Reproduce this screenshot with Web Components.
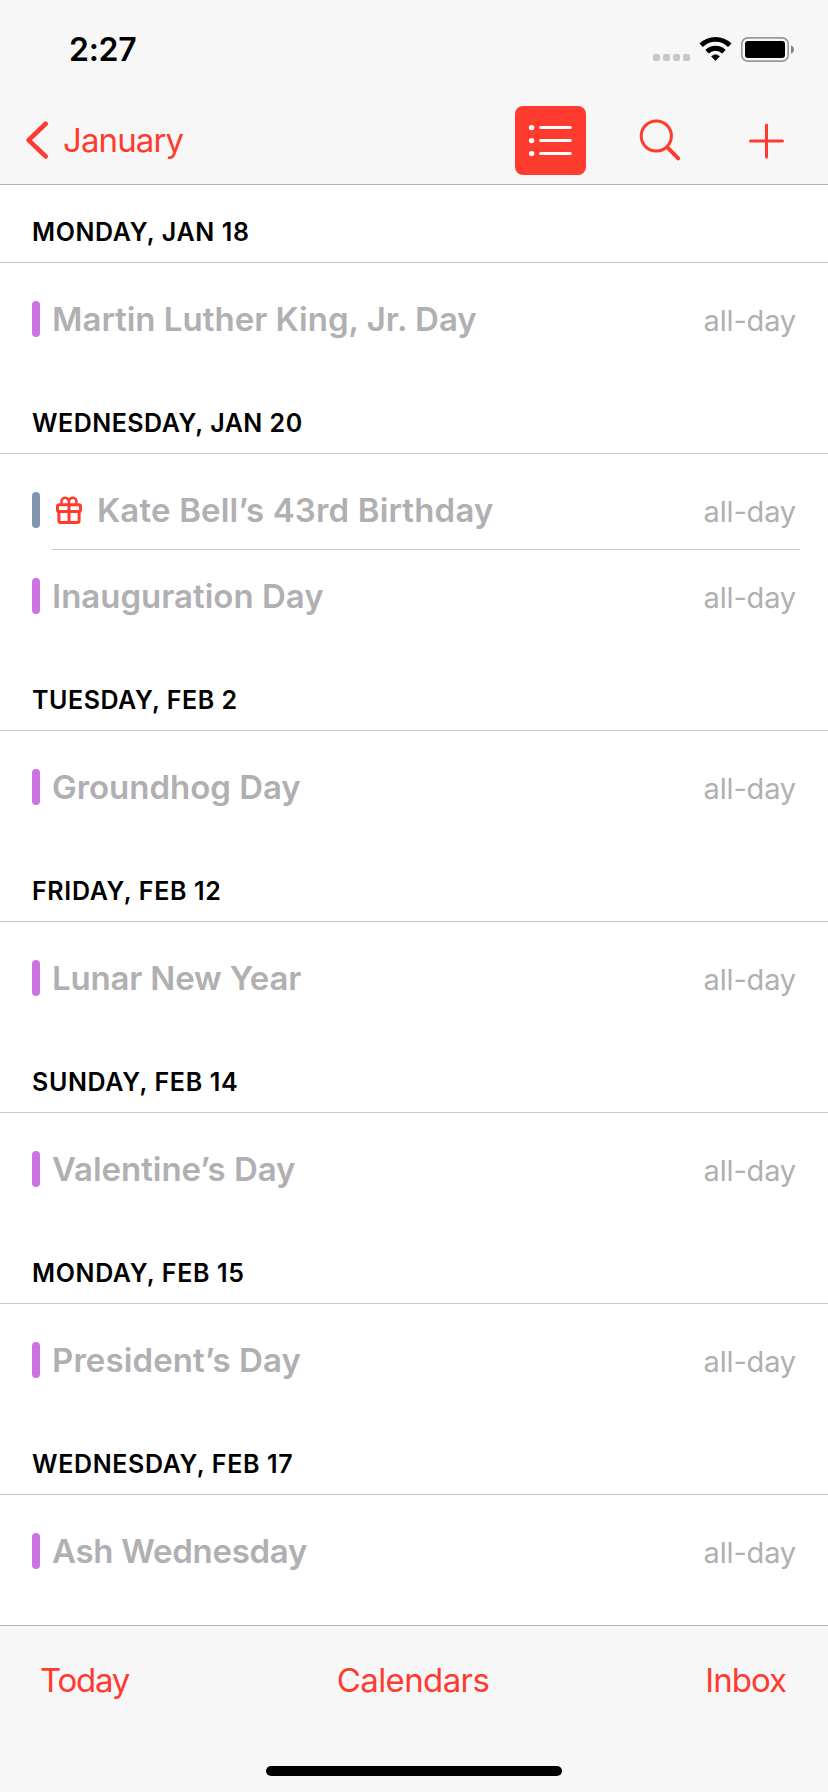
<!DOCTYPE html>
<html lang="en">
<head>
<meta charset="utf-8">
<title>Calendar</title>
<style>
  html, body { margin: 0; height: 100%; }
  body { background: #fff; font-family: Inter, "Liberation Sans", sans-serif; color: #000; }
</style>
</head>
<body>
<calendar-app>
  <status-bar slot="top" time="2:27"></status-bar>
  <nav-bar slot="top" back="January"></nav-bar>
  <day-section heading="MONDAY, JAN 18" spacing=".62px">
    <event-row spacing="0px">Martin Luther King, Jr. Day</event-row>
  </day-section>
  <day-section heading="WEDNESDAY, JAN 20" spacing=".5px">
    <event-row birthday spacing=".17px">Kate Bell’s 43rd Birthday</event-row>
    <event-row spacing="0px">Inauguration Day</event-row>
  </day-section>
  <day-section heading="TUESDAY, FEB 2" spacing=".55px">
    <event-row spacing="-.03px">Groundhog Day</event-row>
  </day-section>
  <day-section heading="FRIDAY, FEB 12" spacing=".66px">
    <event-row spacing="-.18px">Lunar New Year</event-row>
  </day-section>
  <day-section heading="SUNDAY, FEB 14" spacing=".66px">
    <event-row spacing="-.04px">Valentine’s Day</event-row>
  </day-section>
  <day-section heading="MONDAY, FEB 15" spacing=".63px">
    <event-row spacing=".1px">President’s Day</event-row>
  </day-section>
  <day-section heading="WEDNESDAY, FEB 17" spacing=".65px">
    <event-row spacing="-.28px">Ash Wednesday</event-row>
  </day-section>
  <tool-bar slot="bottom">
    <tool-button spacing="-1.27px">Today</tool-button>
    <tool-button spacing="-.6px">Calendars</tool-button>
    <tool-button spacing="-1px">Inbox</tool-button>
  </tool-bar>
</calendar-app>

<script>
function define(name, render) {
  customElements.define(name, class extends HTMLElement {
    constructor() {
      super();
      this.attachShadow({ mode: 'open' });
    }
    connectedCallback() {
      this.shadowRoot.innerHTML = render(this);
    }
  });
}

define('calendar-app', () => `
  <style>
    :host { display: flex; flex-direction: column; width: 828px; height: 1792px; overflow: hidden; }
    header { flex: none; height: 184px; background: #f7f7f7; border-bottom: 1px solid #b2b2b2; }
    main { flex: 1; min-height: 0; overflow: hidden; }
  </style>
  <header><slot name="top"></slot></header>
  <main><slot></slot></main>
  <slot name="bottom"></slot>`);

define('status-bar', el => `
  <style>
    :host { display: flex; height: 98px; box-sizing: border-box; padding: 30px 33px 0 69px; justify-content: space-between; align-items: flex-start; }
    time { font-size: 32px; font-weight: 570; line-height: 39px; letter-spacing: -.3px; }
    svg { display: block; margin-top: 4px; }
  </style>
  <time>${el.getAttribute('time')}</time>
  <svg width="144" height="32" viewBox="651 34 144 32">
    <g fill="#c7c7c7">
      <rect x="653" y="54" width="7" height="7" rx="2"/><rect x="663" y="54" width="7" height="7" rx="2"/>
      <rect x="673" y="54" width="7" height="7" rx="2"/><rect x="683" y="54" width="7" height="7" rx="2"/>
    </g>
    <g fill="none" stroke="#000" stroke-width="4.9">
      <path d="M701.2 45.3a20.3 20.3 0 0 1 28.6 0"/>
      <path d="M707.1 51.7a11.9 11.9 0 0 1 16.8 0"/>
    </g>
    <path d="M711.5 56.4a6.2 6.2 0 0 1 8 0l-4 4.2z" stroke="#000" stroke-width=".6" stroke-linejoin="round"/>
    <rect x="741.8" y="37.8" width="46.4" height="23.4" rx="6" fill="none" stroke="#999" stroke-width="1.7"/>
    <rect x="745" y="41" width="40" height="17" rx="3"/>
    <path d="M791 45.2c4 1.4 4 7.2 0 8.6z" fill="#858585"/>
  </svg>`);

define('nav-bar', el => `
  <style>
    :host { display: flex; align-items: center; justify-content: space-between; height: 86px; box-sizing: border-box; padding: 0 40px 1px 24px; color: #ff3b30; }
    svg { display: block; fill: none; stroke: currentColor; stroke-linecap: round; }
    .back { display: flex; align-items: center; gap: 13px; font-size: 33px; line-height: 40px; letter-spacing: -.9px; margin-bottom: 1px; }
    .actions { display: flex; align-items: center; }
    .list { width: 71px; height: 69px; border-radius: 8px; background: #ff3b30; color: #fff; margin-right: 48px; }
    .search { margin-right: 64px; }
  </style>
  <div class="back">
    <svg width="26" height="42" viewBox="24 119 26 42" stroke-width="4.7" stroke-linejoin="round"><path d="M45.7 123.8 28.6 140.1 45.7 156.4"/></svg>
    <span>${el.getAttribute('back')}</span>
  </div>
  <div class="actions">
    <div class="list">
      <svg width="71" height="69" viewBox="515 106 71 69" stroke-width="3">
        <path d="M540.8 127.5h29.5M540.8 140.5h29.5M540.8 153.5h29.5"/>
        <g fill="currentColor" stroke="none"><circle cx="531.6" cy="127.6" r="2.7"/><circle cx="531.6" cy="140.6" r="2.7"/><circle cx="531.6" cy="153.6" r="2.7"/></g>
      </svg>
    </div>
    <svg class="search" width="50" height="50" viewBox="634 115.5 50 50" stroke-width="3">
      <circle cx="656.3" cy="135.5" r="15.1"/><path d="M667.4 146.9 678.2 157.8" stroke-width="4"/>
    </svg>
    <svg width="40" height="40" viewBox="748 120.5 40 40" stroke-width="3"><path d="M750.5 140.5h32M766.5 124.5v32"/></svg>
  </div>`);

define('day-section', el => `
  <style>
    :host { display: block; margin-bottom: 17px; }
    h2 { margin: 0; box-sizing: border-box; height: 78px; padding: 32px 32px 0; border-bottom: 1px solid #c8c8ca;
         font-size: 25px; font-weight: 560; line-height: 30px; letter-spacing: ${el.getAttribute('spacing')}; }
    .events { padding-top: 10px; }
  </style>
  <h2>${el.getAttribute('heading')}</h2>
  <div class="events"><slot></slot></div>`);

const GIFT = `
  <svg width="28" height="30" viewBox="55 495 28 30" fill="none" stroke="#ff3b30" stroke-width="3" stroke-linejoin="round">
    <rect x="57.5" y="504.7" width="23" height="6.8" rx="1.6"/>
    <path d="M58.9 511.5v9.2q0 1.8 1.8 1.8h16.6q1.8 0 1.8-1.8v-9.2M69 504.5v18"/>
    <path stroke-width="2.6" d="M69 504.3v-3.2a3.8 3.8 0 1 0-6.9 2.6M69 504.3v-3.2a3.8 3.8 0 1 1 6.9 2.6"/>
  </svg>`;

define('event-row', el => {
  const birthday = el.hasAttribute('birthday');
  return `
  <style>
    :host { display: flex; height: 86px; box-sizing: border-box; padding: 0 28px 0 32px; gap: 12px; color: #b0b0b2; }
    .bar { width: 8px; height: 36px; margin-top: 28px; border-radius: 4px; background: ${birthday ? '#8295af' : '#cc73e1'}; }
    .body { flex: 1; display: flex; align-items: flex-start; padding-top: 26px; padding-right: 4px; border-bottom: 1px solid transparent; white-space: nowrap; }
    :host(:not(:last-of-type)) .body { border-bottom-color: #c8c8ca; }
    svg { display: block; margin: 5px 14px 0 3px; }
    .title { flex: 1; font-size: 33px; font-weight: 570; line-height: 40px; letter-spacing: ${el.getAttribute('spacing')}; }
    .when { font-size: 29px; line-height: 35px; letter-spacing: -.17px; margin-top: 4px; }
  </style>
  <div class="bar"></div>
  <div class="body">${birthday ? GIFT : ''}<span class="title"><slot></slot></span><span class="when">all-day</span></div>`;
});

define('tool-bar', () => `
  <style>
    :host { flex: none; display: flex; flex-direction: column; align-items: center; height: 167px; box-sizing: border-box;
            border-top: 1px solid #b2b2b2; background: #f7f7f7; }
    nav { width: 100%; box-sizing: border-box; display: grid; grid-template-columns: 1fr auto 1fr; padding: 34px 42px 0 40px; }
    ::slotted(:last-child) { justify-self: end; }
    .home { width: 296px; height: 10px; border-radius: 5px; background: #000; margin-top: 66px; }
  </style>
  <nav><slot></slot></nav>
  <div class="home"></div>`);

define('tool-button', el => `
  <style>
    :host { display: block; color: #ff3b30; font-size: 33px; line-height: 40px; letter-spacing: ${el.getAttribute('spacing')}; }
  </style>
  <slot></slot>`);
</script>
</body>
</html>
